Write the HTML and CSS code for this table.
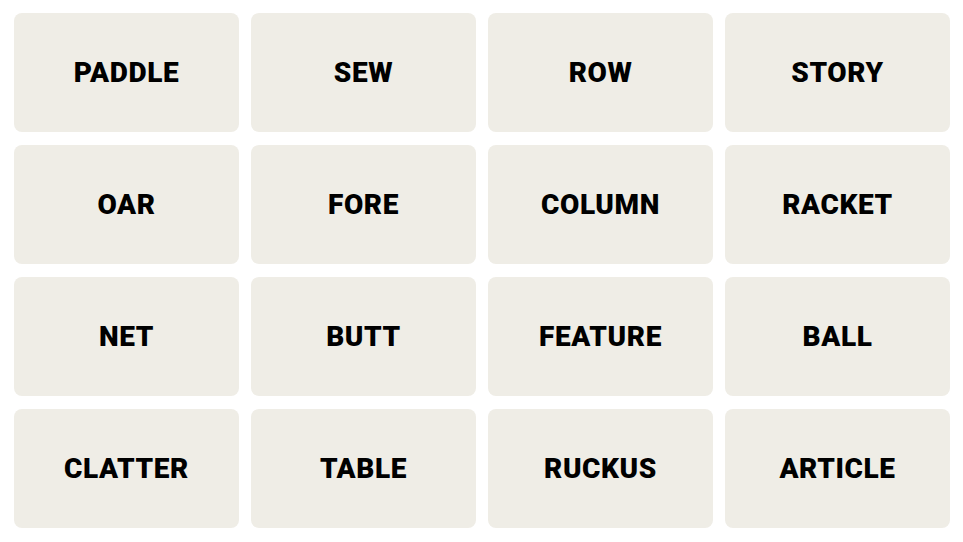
FILE: index.html
```html
<!DOCTYPE html>
<html lang="en">
<head>
<meta charset="utf-8">
<title>Connections</title>
<link rel="stylesheet" href="styles.css">
</head>
<body>
<main class="board">
  <div class="tile">PADDLE</div>
  <div class="tile">SEW</div>
  <div class="tile">ROW</div>
  <div class="tile">STORY</div>
  <div class="tile">OAR</div>
  <div class="tile">FORE</div>
  <div class="tile">COLUMN</div>
  <div class="tile">RACKET</div>
  <div class="tile">NET</div>
  <div class="tile">BUTT</div>
  <div class="tile">FEATURE</div>
  <div class="tile">BALL</div>
  <div class="tile">CLATTER</div>
  <div class="tile">TABLE</div>
  <div class="tile">RUCKUS</div>
  <div class="tile">ARTICLE</div>
</main>
</body>
</html>
```
FILE: styles.css
```css
html, body {
  margin: 0;
  padding: 0;
  background: #ffffff;
}
.board {
  display: grid;
  grid-template-columns: repeat(4, 225px);
  grid-template-rows: repeat(4, 119px);
  column-gap: 12px;
  row-gap: 13px;
  padding: 13px 0 0 14px;
}
.tile {
  background: #efede6;
  border-radius: 8px;
  display: flex;
  align-items: center;
  justify-content: center;
  font-family: Roboto, "Liberation Sans", sans-serif;
  font-weight: 900;
  font-size: 28px;
  letter-spacing: 0.6px;
  color: #000;
}
```
